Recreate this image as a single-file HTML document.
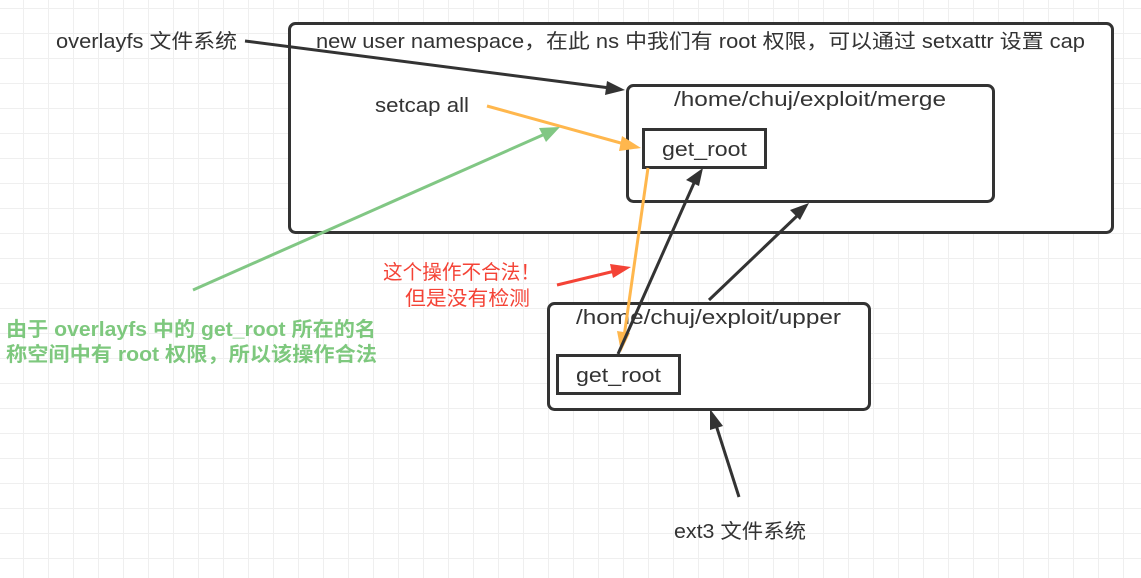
<!DOCTYPE html>
<html><head><meta charset="utf-8"><style>
body{margin:0;width:1141px;height:578px;overflow:hidden;background:#fff;
background-image:linear-gradient(#efefef 1px,transparent 1px),linear-gradient(90deg,#efefef 1px,transparent 1px);
background-size:25px 25px;background-position:-2px 8px;}
svg{position:absolute;left:0;top:0}
text{font-family:"Liberation Sans","Noto Sans CJK SC",sans-serif;font-size:20px;fill:#333}
</style></head><body>
<svg width="1141" height="578" xmlns="http://www.w3.org/2000/svg">
<g fill="#fff" stroke="#333" stroke-width="3">
<rect x="289.5" y="23.5" width="823" height="209" rx="6"/>
<rect x="627.5" y="85.5" width="366" height="116" rx="6"/>
<rect x="643.5" y="129.5" width="122" height="38"/>
<rect x="548.5" y="303.5" width="321" height="106" rx="6"/>
<rect x="557.5" y="355.5" width="122" height="38"/>
</g>
<g>
<text x="56" y="48" textLength="181" lengthAdjust="spacingAndGlyphs">overlayfs 文件系统</text>
<text x="316" y="48" textLength="769" lengthAdjust="spacingAndGlyphs">new user namespace，在此 ns 中我们有 root 权限，可以通过 setxattr 设置 cap</text>
<text x="375" y="112" textLength="94" lengthAdjust="spacingAndGlyphs">setcap all</text>
<text x="674" y="106" textLength="272" lengthAdjust="spacingAndGlyphs">/home/chuj/exploit/merge</text>
<text x="662" y="156" textLength="85" lengthAdjust="spacingAndGlyphs">get_root</text>
<text x="576" y="324" textLength="265" lengthAdjust="spacingAndGlyphs">/home/chuj/exploit/upper</text>
<text x="576" y="382" textLength="85" lengthAdjust="spacingAndGlyphs">get_root</text>
<text x="674" y="538" textLength="132" lengthAdjust="spacingAndGlyphs">ext3 文件系统</text>
<text x="383" y="279" textLength="157" lengthAdjust="spacingAndGlyphs" style="fill:#f44336">这个操作不合法！</text>
<text x="405" y="305" textLength="125" lengthAdjust="spacingAndGlyphs" style="fill:#f44336">但是没有检测</text>
<text x="6" y="336" textLength="370" lengthAdjust="spacingAndGlyphs" style="fill:#7ec87e;font-weight:bold">由于 overlayfs 中的 get_root 所在的名</text>
<text x="6" y="361" textLength="371" lengthAdjust="spacingAndGlyphs" style="fill:#7ec87e;font-weight:bold">称空间中有 root 权限，所以该操作合法</text>
</g>
<g stroke-width="3" fill="none">
<line x1="245" y1="41" x2="610" y2="88" stroke="#333"/>
<path d="M625,90 L607,81 L605,95 z" fill="#333" stroke="none"/>
<line x1="487" y1="106" x2="628" y2="145" stroke="#ffb74d"/>
<path d="M641,148 L622,136 L619,151 z" fill="#ffb74d" stroke="none"/>
<line x1="193" y1="290" x2="545" y2="134" stroke="#81c784"/>
<path d="M560,127 L539,128 L546,142 z" fill="#81c784" stroke="none"/>
<line x1="648" y1="168" x2="624" y2="337" stroke="#ffb74d"/>
<path d="M621,352 L617,331 L630,333 z" fill="#ffb74d" stroke="none"/>
<line x1="618" y1="354" x2="694" y2="183" stroke="#333"/>
<path d="M703,168 L686,180 L699,186 z" fill="#333" stroke="none"/>
<line x1="709" y1="300" x2="798" y2="215" stroke="#333"/>
<path d="M809,203 L790,210 L800,220 z" fill="#333" stroke="none"/>
<line x1="557" y1="285" x2="615" y2="271" stroke="#f44336"/>
<path d="M631,267 L610,264 L613,278 z" fill="#f44336" stroke="none"/>
<line x1="739" y1="497" x2="716" y2="425" stroke="#333"/>
<path d="M710,409 L710,430 L723,426 z" fill="#333" stroke="none"/>
</g>
</svg>
</body></html>
